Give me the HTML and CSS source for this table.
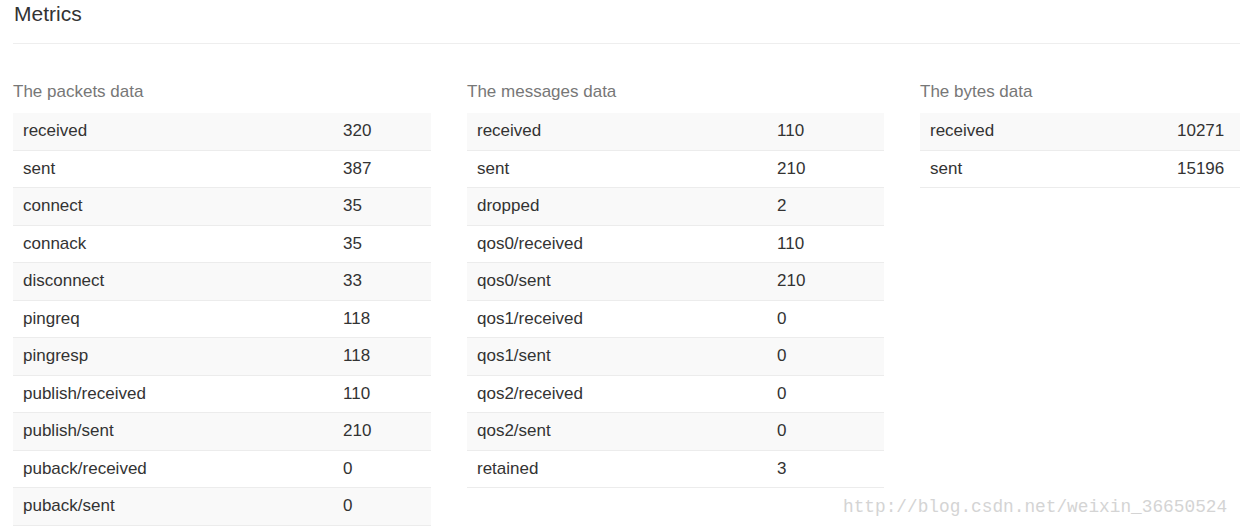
FILE: index.html
```html
<!DOCTYPE html>
<html>
<head>
<meta charset="utf-8">
<title>Metrics</title>
<link rel="stylesheet" href="styles.css">
</head>
<body>
<div class="page">
  <h1 class="title">Metrics</h1>
  <div class="grid">
    <section class="panel">
      <h2 class="panel-title">The packets data</h2>
      <table class="metrics metrics-packets">
        <tr><td>received</td><td>320</td></tr>
        <tr><td>sent</td><td>387</td></tr>
        <tr><td>connect</td><td>35</td></tr>
        <tr><td>connack</td><td>35</td></tr>
        <tr><td>disconnect</td><td>33</td></tr>
        <tr><td>pingreq</td><td>118</td></tr>
        <tr><td>pingresp</td><td>118</td></tr>
        <tr><td>publish/received</td><td>110</td></tr>
        <tr><td>publish/sent</td><td>210</td></tr>
        <tr><td>puback/received</td><td>0</td></tr>
        <tr><td>puback/sent</td><td>0</td></tr>
      </table>
    </section>
    <section class="panel">
      <h2 class="panel-title">The messages data</h2>
      <table class="metrics metrics-messages">
        <tr><td>received</td><td>110</td></tr>
        <tr><td>sent</td><td>210</td></tr>
        <tr><td>dropped</td><td>2</td></tr>
        <tr><td>qos0/received</td><td>110</td></tr>
        <tr><td>qos0/sent</td><td>210</td></tr>
        <tr><td>qos1/received</td><td>0</td></tr>
        <tr><td>qos1/sent</td><td>0</td></tr>
        <tr><td>qos2/received</td><td>0</td></tr>
        <tr><td>qos2/sent</td><td>0</td></tr>
        <tr><td>retained</td><td>3</td></tr>
      </table>
    </section>
    <section class="panel">
      <h2 class="panel-title">The bytes data</h2>
      <table class="metrics metrics-bytes">
        <tr><td>received</td><td>10271</td></tr>
        <tr><td>sent</td><td>15196</td></tr>
      </table>
    </section>
  </div>
</div>
<div class="watermark">http://blog.csdn.net/weixin_36650524</div>
</body>
</html>
```
FILE: styles.css
```css
html, body {
  margin: 0;
  padding: 0;
  background: #fff;
  overflow: hidden;
}
body {
  font-family: "Liberation Sans", Arial, Helvetica, sans-serif;
  color: #333;
  width: 1240px;
  height: 526px;
  position: relative;
}
.page {
  padding-left: 13px;
}
.title {
  margin: 0;
  padding: 0 0 15px 1px;
  font-size: 21px;
  font-weight: normal;
  line-height: 28px;
  color: #333;
  border-bottom: 1px solid #eeeeee;
}
.grid {
  display: grid;
  grid-template-columns: 418px 417px 1fr;
  column-gap: 36px;
  margin-top: 36px;
}
.panel-title {
  margin: 0 0 9px 0;
  font-size: 17px;
  font-weight: normal;
  line-height: 24px;
  color: #777;
}
.metrics {
  width: 100%;
  border-collapse: collapse;
  table-layout: fixed;
  font-size: 17px;
}
.metrics td {
  padding: 6px 10px;
  line-height: 24.5px;
  border-bottom: 1px solid #ececec;
  white-space: nowrap;
}
.metrics tr:nth-child(odd) td {
  background: #f9f9f9;
}
.metrics-packets td:first-child { width: 300px; }
.metrics-messages td:first-child { width: 280px; }
.metrics-bytes td:first-child { width: 227px; }
.watermark {
  position: absolute;
  left: 843px;
  top: 496px;
  font-family: "Liberation Mono", "DejaVu Sans Mono", monospace;
  font-size: 17.8px;
  line-height: 22px;
  color: #d4d4d4;
  letter-spacing: 0;
}
```
